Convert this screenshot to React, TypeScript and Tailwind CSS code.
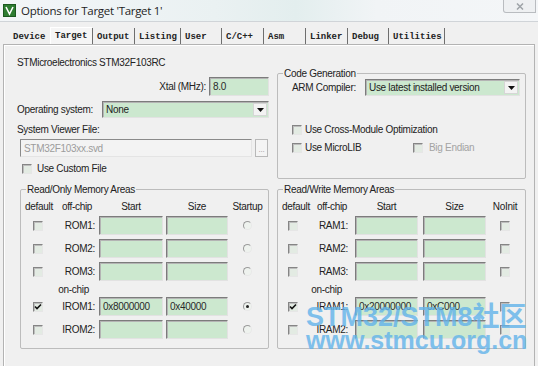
import type { ReactNode } from "react";

const FIELD =
  "bg-[#cce8cf] border border-t-[#7c7c7c] border-l-[#7c7c7c] border-r-[#e2e2e2] border-b-[#e2e2e2] shadow-[inset_1px_1px_0_#b4b4b4]";

const TABS = [
  { label: "Device", w: 41, sep: false },
  { label: "Target", w: 42, sep: false, active: true },
  { label: "Output", w: 42, sep: true },
  { label: "Listing", w: 46, sep: true },
  { label: "User", w: 41, sep: true },
  { label: "C/C++", w: 42, sep: true },
  { label: "Asm", w: 42, sep: true },
  { label: "Linker", w: 42, sep: true },
  { label: "Debug", w: 41, sep: true },
  { label: "Utilities", w: 57, sep: true, last: true },
];

function Check({ checked, className = "" }: { checked?: boolean; className?: string }) {
  return (
    <span
      className={`w-[10px] h-[10px] shrink-0 flex items-center justify-center border border-t-[#858585] border-l-[#858585] border-r-[#e6e6e6] border-b-[#e6e6e6] bg-[#e3ebe3] shadow-[inset_1px_1px_0_#bdbdbd] ${className}`}
    >
      {checked && (
        <svg width="8" height="8" viewBox="0 0 8 8">
          <path d="M1 3.5 L3 5.5 L7 1.5" stroke="#111" strokeWidth="1.6" fill="none" />
        </svg>
      )}
    </span>
  );
}

function Radio({ on }: { on?: boolean }) {
  return (
    <span className="w-[9px] h-[9px] rounded-full border border-t-[#9a9a9a] border-l-[#9a9a9a] border-r-[#e8e8e8] border-b-[#e8e8e8] bg-[#eef2ee] flex items-center justify-center">
      {on && <span className="w-[3px] h-[3px] rounded-full bg-[#222]" />}
    </span>
  );
}

function Field({ value = "", className = "" }: { value?: string; className?: string }) {
  return (
    <div className={`${FIELD} ${className} flex items-center pl-[3px] text-[#2a2a2a]`}>
      {value}
    </div>
  );
}

function Select({ value, className }: { value: string; className: string }) {
  return (
    <div className={`${FIELD} ${className} flex items-center`}>
      <span className="flex-1 pl-[3px] whitespace-nowrap">{value}</span>
      <span className="w-[14px] h-[13px] mr-[1px] bg-[#f3f3f3] border border-[#d6d6d6] flex items-center justify-center">
        <svg width="7" height="4" viewBox="0 0 7 4">
          <path d="M0 0h7L3.5 4z" fill="#111" />
        </svg>
      </span>
    </div>
  );
}

function Group({ title, className, children }: { title: string; className: string; children: ReactNode }) {
  return (
    <fieldset className={`border border-[#bcbcbc] rounded-[2px] ${className}`}>
      <legend className="ml-[5px] px-[1px] leading-[13px]">{title}</legend>
      {children}
    </fieldset>
  );
}

function MemArea({ title, kind }: { title: string; kind: "ro" | "rw" }) {
  const ro = kind === "ro";
  const rows = ro
    ? [
        { label: "ROM1:" },
        { label: "ROM2:" },
        { label: "ROM3:" },
        null,
        { label: "IROM1:", start: "0x8000000", size: "0x40000", checked: true, on: true },
        { label: "IROM2:" },
      ]
    : [
        { label: "RAM1:" },
        { label: "RAM2:" },
        { label: "RAM3:" },
        null,
        { label: "IRAM1:", start: "0x20000000", size: "0xC000", checked: true },
        { label: "IRAM2:" },
      ];
  const wA = 36;
  const wB = ro ? 40 : 36;
  const gap1 = ro ? "ml-[2px]" : "ml-[5px]";
  const wC = ro ? "w-[64px]" : "w-[63px]";
  const gap2 = ro ? "ml-[3px]" : "ml-[5px]";
  const wD = ro ? "w-[62px]" : "w-[63px]";
  const wE = ro ? "w-[39px]" : "w-[38px]";
  const chkPad = ro ? "pl-[12px]" : "pl-[10px]";

  return (
    <Group title={title} className={ro ? "w-[249px] ml-[16px] pb-[7px]" : "w-[249px] ml-[8px] pb-[7px]"}>
      <div className="flex items-center h-[16px] mt-[2px]">
        <div style={{ width: wA }} className="text-center">default</div>
        <div style={{ width: wB }} className="text-center whitespace-nowrap">off-chip</div>
        <div className={`${gap1} ${wC} text-center`}>Start</div>
        <div className={`${gap2} ${wD} text-center`}>Size</div>
        <div className={`${wE} text-center`}>{ro ? "Startup" : "NoInit"}</div>
      </div>
      {rows.map((r, i) =>
        r === null ? (
          <div key={i} className="flex items-center h-[12px]">
            <div style={{ width: wA + wB }} className="text-right pr-[8px]">on-chip</div>
          </div>
        ) : (
          <div key={i} className="flex items-center h-[23px]">
            <div style={{ width: wA }} className={`flex ${chkPad}`}>
              <Check checked={r.checked} />
            </div>
            <div style={{ width: wB }} className="text-right pr-[2px] whitespace-nowrap">
              {r.label}
            </div>
            <Field value={r.start} className={`${gap1} ${wC} h-[19px]`} />
            <Field value={r.size} className={`${gap2} ${wD} h-[19px]`} />
            <div className={`${wE} flex justify-center`}>
              {ro ? <Radio on={"on" in r && r.on} /> : <Check />}
            </div>
          </div>
        )
      )}
    </Group>
  );
}

export default function App() {
  return (
    <div className="relative w-[538px] h-[366px] overflow-hidden bg-[#f0f0f0] text-[10px] tracking-[-0.3px] text-[#222] font-['Liberation_Sans',Arial,sans-serif] flex flex-col">
      {/* title bar */}
      <div className="h-[22px] shrink-0 flex items-center bg-[linear-gradient(90deg,#f3f6f8_0%,#eaf1f2_40%,#e3eeee_55%,#f1f4f6_70%,#f4f6f8_100%)] border-b border-[#d0d4d8]">
        <svg width="13" height="13" viewBox="0 0 13 13" className="ml-[3px]">
          <rect x="0.5" y="0.5" width="12" height="12" fill="#2f7d32" stroke="#1c5a20" />
          <path d="M3 3 L6.5 10 L10 3" stroke="#fff" strokeWidth="1.6" fill="none" />
        </svg>
        <span className="ml-[5px] text-[11.5px] text-[#1e1e1e] font-['Open_Sans',sans-serif] tracking-[-0.3px]">
          Options for Target 'Target 1'
        </span>
        <div className="ml-auto mr-[2px] self-start w-[33px] h-[13px] rounded-bl-[3px] border border-t-0 border-[#b9bcc0] bg-[#eef0f2] flex items-center justify-center">
          <svg width="8" height="7" viewBox="0 0 8 7">
            <path d="M1 0.5 L7 6.5 M7 0.5 L1 6.5" stroke="#9ea3a8" strokeWidth="1.5" />
          </svg>
        </div>
      </div>

      {/* tabs */}
      <div className="h-[22px] shrink-0 flex items-end pl-[9px] font-['Liberation_Mono',monospace] text-[9px] tracking-normal font-bold">
        {TABS.map((t) => (
          <div
            key={t.label}
            style={{ width: t.w }}
            className={`flex items-center pl-[4px] whitespace-nowrap ${
              t.active
                ? "h-[17px] border-l border-t border-white bg-[#f5f5f5] pt-[2px]"
                : "h-[16px] pt-[4px]"
            } ${t.sep ? "border-l border-[#6e6e6e]" : ""} ${t.last ? "border-r border-r-[#6e6e6e]" : ""}`}
          >
            {t.label}
          </div>
        ))}
      </div>

      {/* page */}
      <div className="mx-[3px] flex-1 border border-[#b3b3b3] border-b-0 shadow-[inset_1px_1px_0_#ffffff] flex flex-col">
        <div className="h-[138px] shrink-0 flex">
          {/* left column */}
          <div className="w-[265px] pl-[13px] flex flex-col">
            <div className="mt-[11px] leading-[13px]">STMicroelectronics STM32F103RC</div>
            <div className="mt-[8px] flex items-center justify-end">
              <span className="mr-[3px]">Xtal (MHz):</span>
              <Field value="8.0" className="w-[60px] h-[19px] items-start pt-[1px]" />
            </div>
            <div className="mt-[5px] flex items-center">
              <span className="w-[85px]">Operating system:</span>
              <Select value="None" className="w-[167px] h-[17px]" />
            </div>
            <div className="mt-[5px] leading-[13px]">System Viewer File:</div>
            <div className="mt-[3px] flex items-center">
              <div className="ml-[3px] w-[232px] h-[18px] flex items-center pl-[3px] text-[#9c9c9c] bg-[#f3f3f3] border border-t-[#8a8a8a] border-l-[#8a8a8a] border-r-[#e4e4e4] border-b-[#e4e4e4]">
                STM32F103xx.svd
              </div>
              <div className="ml-[3px] w-[13px] h-[18px] border border-[#b8b8b8] bg-[#f4f4f4] flex items-end justify-center text-[8px] text-[#999] leading-[12px]">
                ...
              </div>
            </div>
            <div className="mt-[5px] h-[13px] flex items-center">
              <Check className="ml-[5px]" />
              <span className="ml-[5px]">Use Custom File</span>
            </div>
          </div>

          {/* right column */}
          <div className="ml-[8px] mt-[22px]">
            <Group title="Code Generation" className="w-[249px] h-[112px]">
              <div className="-mt-[1px] flex items-center pl-[14px]">
                <span className="w-[73px]">ARM Compiler:</span>
                <Select value="Use latest installed version" className="w-[155px] h-[17px]" />
              </div>
              <div className="mt-[27px] h-[13px] flex items-center pl-[14px]">
                <Check />
                <span className="ml-[3px]">Use Cross-Module Optimization</span>
              </div>
              <div className="mt-[5px] h-[13px] flex items-center pl-[14px]">
                <Check />
                <span className="ml-[3px] w-[108px]">Use MicroLIB</span>
                <Check />
                <span className="ml-[6px] text-[#a3a3a3]">Big Endian</span>
              </div>
            </Group>
          </div>
        </div>

        <div className="flex">
          <MemArea title="Read/Only Memory Areas" kind="ro" />
          <MemArea title="Read/Write Memory Areas" kind="rw" />
        </div>
      </div>

      {/* watermark */}
      <div className="absolute left-[306px] top-[304px] text-[#62b3ea] opacity-80 font-bold tracking-normal pointer-events-none">
        <div className="h-[24px] leading-[27px] text-[27px] font-['Liberation_Sans','Noto_Sans_CJK_SC',sans-serif] whitespace-nowrap">
          STM32/STM8社区
        </div>
        <div className="leading-[25px] text-[25px] font-['Liberation_Sans',sans-serif] whitespace-nowrap">
          www.stmcu.org.cn
        </div>
      </div>
    </div>
  );
}
